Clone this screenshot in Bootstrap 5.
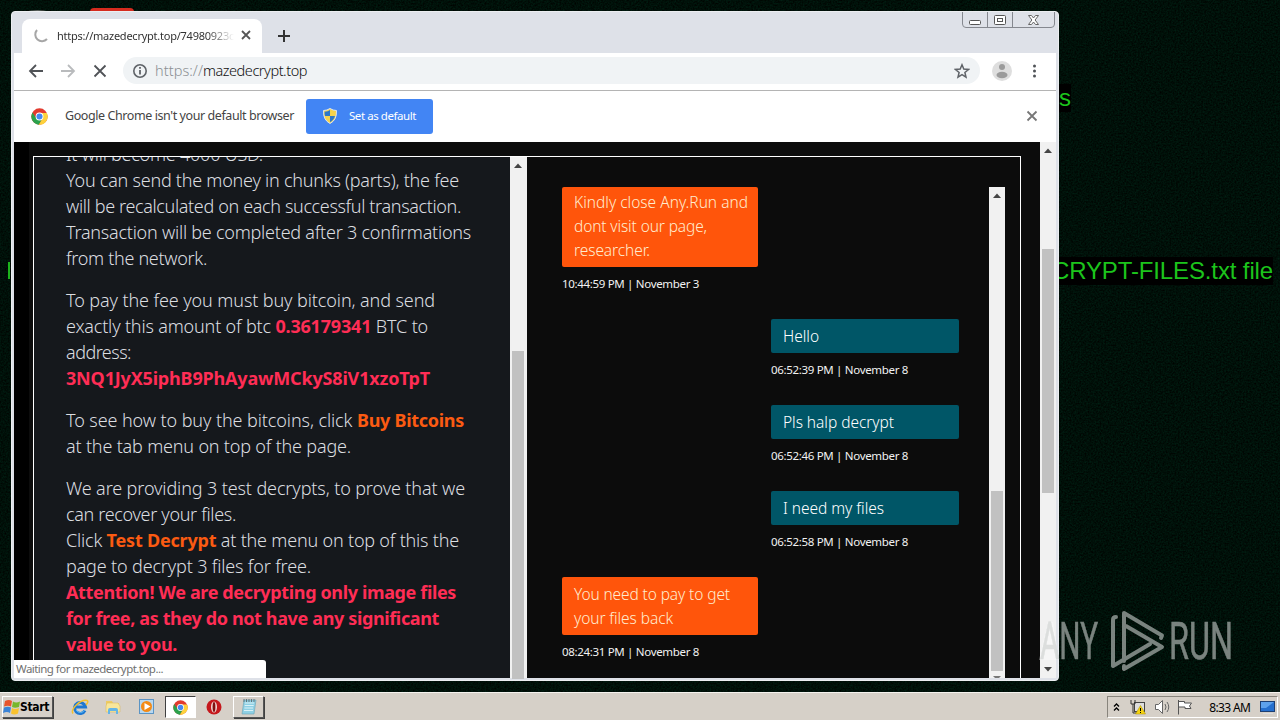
<!DOCTYPE html>
<html lang="en">
<head>
<meta charset="utf-8">
<title>Desktop</title>
<link href="https://cdn.jsdelivr.net/npm/bootstrap@5.3.0/dist/css/bootstrap.min.css" rel="stylesheet">
<style>
body{width:1280px;height:720px;overflow:hidden;background:#000e08;font-family:"Noto Sans","Open Sans",sans-serif;line-height:1}
.desk{height:692px}
.noise{inset:0}
.wall{font:24px/28px "Liberation Sans",sans-serif;color:#1cc41c;background:#000;white-space:pre}
.fit{display:inline-block;white-space:pre}
.win{left:11px;top:11px;width:1048px;height:670px;background:#dee1e8;border-radius:4px;border:1px solid #eceef1;padding:0 2px 2px;overflow:hidden}
.strip{height:41px;background:#dee1e8;padding-left:8px}
.tabx{width:240px;height:34px;background:#fff;border-radius:8px 8px 0 0;margin-top:7px;padding:0 0 2px 12px}
.tabt{width:177px;font:11px "Noto Sans",sans-serif;color:#333;overflow:hidden;-webkit-mask-image:linear-gradient(90deg,#000 150px,transparent 177px)}
.ctl{right:3px;top:-1px;height:17px;border:1px solid #85888f;border-radius:0 0 4px 4px}
.ctl div{border-right:1px solid #85888f}
.ctl div:last-child{border:0}
.ctl svg{display:block}
.tools{height:38px;background:#fff;border-bottom:1px solid #b4b4b4;padding-bottom:2px}
.url{width:857px;height:27px;margin-left:15px;background:#f0f3f5;border-radius:14px;font-size:14.5px;font-weight:300;padding:0 10px 0 9px}
.info{height:51px;background:#fff;color:#444;font-size:12.5px;padding-left:17px}
.setd{width:127px;height:35px;background:#4285f4;color:#fff;border-radius:3px;font-size:11.5px;margin-left:12px;padding:0 0 2px 17px}
.page{height:536px;background:#000}
.canvasx{width:1011px;background:#0c0c0c;margin-left:15px;padding:14px 4px 0}
.frame{border:1px solid #fff;border-bottom:0;height:522px;width:988px}
.left{width:476px;background:#15181c;color:#dcdee0;overflow:hidden;padding-left:32px}
.left .ln{height:26px;line-height:26px;font-size:18px;font-weight:300}
.left .gp{height:16px}
.left b{font-weight:700}
.red{color:#ff2d55}.org{color:#fb5b12}
.sb{width:16px;background:#f1f1f1;position:relative;flex:none}
.thumb{width:12px;background:#c1c1c1;margin:0 2px}
.chat{width:443px;margin:30px 0 0 19px;padding-left:16px}
.bub{border-radius:2px;color:#fff;font-size:15.5px;font-weight:300;line-height:24px;padding:3px 11px 0 12px}
.bo{background:#ff550b;width:196px;color:#ffeccf}
.bt{background:#005667;width:188px;margin-left:209px;height:34px;padding-top:5px}
.tm{height:16px;line-height:16px;font-size:11.5px;color:#f2f2f2;margin-top:9px}
.tmr{margin-left:209px}
.status{left:2px;bottom:2px;width:252px;height:18px;background:#fff;border-top-right-radius:3px;color:#707070;font-size:11.5px;line-height:18px;padding-left:2px}
.task{height:28px;background:#d6d0c8;border-top:1px solid #f4f2ee;padding:3px 2px 0}
.tbtn{height:22px;border:1px solid;border-color:#fff #555 #555 #fff;box-shadow:1px 1px #404040}
.start{width:51px;font:bold 12px/20px "DejaVu Sans Condensed","Liberation Sans",sans-serif;color:#000}
.tdown{background:#fff;border-color:#404040 #fff #fff #404040;box-shadow:none}
.tray{width:171px;height:22px;border:1px solid;border-color:#88847c #fff #fff #88847c;font:12px "Noto Sans",sans-serif;color:#000;padding-left:4px}
</style>
</head>
<body>
<svg width="0" height="0" class="position-absolute"><defs>
<g id="chrome"><circle cx="12" cy="12" r="11.500" fill="#e23b2f"/><path d="M2 6.300A11.500 11.500 0 0 0 11 23.500L16.500 14.500 12 12 7.500 14.500z" fill="#2ba24c"/><path d="M12 7h10.400A11.500 11.500 0 0 1 11 23.500L16.500 14.500z" fill="#fdd23c"/><circle cx="12" cy="12" r="5.500" fill="#fff"/><circle cx="12" cy="12" r="4.300" fill="#4688f1"/></g>
<g id="flag"><path d="M2 3q4-2 7 0L8 8.500Q5 7 1 8.500z" fill="#e8542c"/><path d="M10 3.500q3 2 7 0L16 9q-4 1.500-7 0z" fill="#77b72b"/><path d="M1 9.500q4-1.500 7 0L7 15q-3-2-7 0z" fill="#3b83d6"/><path d="M9 10q3 2 7 0l-1 5.500q-4 2-7 0z" fill="#f9c22e"/></g>
</defs></svg>
<div class="desk position-relative overflow-hidden">
  <svg class="noise position-absolute w-100 h-100"><filter id="n" x="0" y="0" width="100%" height="100%" color-interpolation-filters="sRGB"><feTurbulence type="fractalNoise" baseFrequency=".6" numOctaves="2"/><feColorMatrix values="0 0 0 0 0  0 .15 0 0 -.012  0 .1 0 0 -.016  0 0 0 0 1"/></filter><rect width="1280" height="692" filter="url(#n)"/><path d="M90 12q0-4 4-4h36q4 0 4 4z" fill="#d52b1e"/><path d="M24 12q14-4 26 0z" fill="#5d6460"/></svg>
  <div class="wall position-absolute" style="right:209px;top:84px"><span class="fit">s</span></div>
  <div class="wall position-absolute" style="left:1052px;top:257px;width:221px"><span class="fit" data-w="221">CRYPT-FILES.txt file</span></div>
  <div class="position-absolute" style="left:8px;top:262px;width:2px;height:17px;background:#1cb41c"></div>

  <div class="win position-absolute">
    <div class="strip d-flex">
      <div class="tabx d-flex align-items-center">
        <svg width="16" height="16" fill="none" stroke="#a6a6a6" stroke-width="2"><path d="M3 3A6.200 6.200 0 1 0 13 12"/></svg>
        <div class="tabt" style="margin-left:7px"><span class="fit" data-w="177">https://mazedecrypt.top/74980923c</span></div>
        <svg width="10" height="10" style="margin-left:7px" stroke="#555" stroke-width="1.800"><path d="M1 1l8 8M9 1L1 9"/></svg>
      </div>
      <svg width="14" height="14" style="margin:17px 0 0 15px" stroke="#333" stroke-width="2"><path d="M7 1v12M1 7h12"/></svg>
      <div class="ctl position-absolute d-flex">
        <div><svg width="24" height="16"><rect x="6.500" y="8.500" width="11" height="4" rx="1" fill="#fff" stroke="#555"/></svg></div>
        <div><svg width="24" height="16" fill="#fff" stroke="#555"><rect x="6.500" y="3.500" width="11" height="9" rx="1"/><rect x="9.500" y="6.500" width="5" height="3"/></svg></div>
        <div><svg width="41" height="16"><path d="M15.500 3.500h3l2 2.500 2-2.500h3l-3.400 4.500 3.400 4.500h-3l-2-2.500-2 2.500h-3l3.400-4.500z" fill="#fff" stroke="#666"/></svg></div>
      </div>
    </div>
    <div class="tools d-flex align-items-center">
      <svg width="94" height="16" fill="none" stroke-width="1.800"><path d="M29 8H16M22 2l-6 6 6 6" stroke="#505357"/><path d="M47 8h13M54 2l6 6-6 6" stroke="#b9bbbd"/><path d="M80.500 2.500l11 11M91.500 2.500l-11 11" stroke="#505357"/></svg>
      <div class="url d-flex align-items-center">
        <svg width="16" height="16" fill="none" stroke="#5f6368"><circle cx="8" cy="8" r="6.200" stroke-width="1.600"/><path d="M8 7v4.500M8 4v1.800" stroke-width="1.800"/></svg>
        <span class="fit" style="margin-left:7px"><span class="fit" data-w="48" style="color:#8b8f93">https://</span><span class="fit" data-w="104" style="color:#111">mazedecrypt.top</span></span>
        <svg class="ms-auto" width="16" height="16" viewBox="0 0 16 16" fill="none" stroke="#5f6368" stroke-width="1.500"><path d="M8 1.800l1.800 4.300 4.700.4-3.600 3 1.100 4.600L8 11.700 4 14.100l1.100-4.600-3.600-3 4.700-.4z"/></svg>
      </div>
      <svg width="60" height="22"><circle cx="22" cy="11" r="10" fill="#dedede"/><circle cx="22" cy="7" r="3" fill="#9b9b9b"/><ellipse cx="22" cy="15" rx="5.500" ry="3.200" fill="#9b9b9b"/><g fill="#505357"><circle cx="54.500" cy="6" r="1.500"/><circle cx="54.500" cy="11" r="1.500"/><circle cx="54.500" cy="16" r="1.500"/></g></svg>
    </div>
    <div class="info d-flex align-items-center">
      <svg width="17" height="17" viewBox="0 0 24 24"><use href="#chrome"/></svg>
      <span class="fit" data-w="229" style="margin-left:17px">Google Chrome isn't your default browser</span>
      <div class="setd d-flex align-items-center">
        <svg width="14" height="16" viewBox="0 0 14 16"><path d="M7 .5Q10 2.500 13.500 2.500 14 12 7 15.500 0 12 .5 2.500 4 2.500 7 .5z" fill="#f6d34c" stroke="#dfe6ea"/><path d="M7 2v6H2q-.6-2-.4-4.300Q5 3.500 7 2zM7 8h5Q11 12 7 14.300z" fill="#2e78c8"/></svg>
        <span class="fit" data-w="67" style="margin-left:12px">Set as default</span>
      </div>
      <svg class="ms-auto" style="margin:0 18px 2px 0" width="12" height="12" stroke="#777" stroke-width="1.800"><path d="M1.500 1.500l9 9M10.500 1.500l-9 9"/></svg>
    </div>
    <div class="page d-flex">
      <div class="canvasx">
        <div class="frame d-flex">
          <div class="left"><div style="margin-top:-16px">
            <div class="ln"><span class="fit" data-w="197">It will become 4000 USD.</span></div>
            <div class="ln"><span class="fit" data-w="393">You can send the money in chunks (parts), the fee</span></div>
            <div class="ln"><span class="fit" data-w="395">will be recalculated on each successful transaction.</span></div>
            <div class="ln"><span class="fit" data-w="405">Transaction will be completed after 3 confirmations</span></div>
            <div class="ln"><span class="fit" data-w="141">from the network.</span></div>
            <div class="gp"></div>
            <div class="ln"><span class="fit" data-w="369">To pay the fee you must buy bitcoin, and send</span></div>
            <div class="ln"><span class="fit" data-w="362">exactly this amount of btc <b class="red">0.36179341</b> BTC to</span></div>
            <div class="ln"><span class="fit" data-w="65">address:</span></div>
            <div class="ln"><span class="fit" data-w="364"><b class="red">3NQ1JyX5iphB9PhAyawMCkyS8iV1xzoTpT</b></span></div>
            <div class="gp"></div>
            <div class="ln"><span class="fit" data-w="291">To see how to buy the bitcoins, click </span><span class="fit" data-w="107"><b class="org">Buy Bitcoins</b></span></div>
            <div class="ln"><span class="fit" data-w="285">at the tab menu on top of the page.</span></div>
            <div class="gp"></div>
            <div class="ln"><span class="fit" data-w="399">We are providing 3 test decrypts, to prove that we</span></div>
            <div class="ln"><span class="fit" data-w="170">can recover your files.</span></div>
            <div class="ln"><span class="fit" data-w="393">Click <b class="org">Test Decrypt</b> at the menu on top of this the</span></div>
            <div class="ln"><span class="fit" data-w="245">page to decrypt 3 files for free.</span></div>
            <div class="ln"><span class="fit" data-w="390"><b class="red">Attention! We are decrypting only image files</b></span></div>
            <div class="ln"><span class="fit" data-w="373"><b class="red">for free, as they do not have any significant</b></span></div>
            <div class="ln"><span class="fit" data-w="111"><b class="red">value to you.</b></span></div>
          </div></div>
          <div class="sb" style="width:17px"><svg class="d-block" width="16" height="16"><path d="M4 11h8L8 6.500z" fill="#444"/></svg><div class="thumb" style="margin-top:178px;height:328px"></div></div>
          <div class="chat">
            <div class="bub bo" style="height:80px"><div><span class="fit" data-w="174">Kindly close Any.Run and</span></div><div><span class="fit" data-w="133">dont visit our page,</span></div><div><span class="fit" data-w="76">researcher.</span></div></div>
            <div class="tm"><span class="fit" data-w="137">10:44:59 PM | November 3</span></div>
            <div class="bub bt" style="margin-top:27px"><span class="fit" data-w="36">Hello</span></div>
            <div class="tm tmr"><span class="fit" data-w="137">06:52:39 PM | November 8</span></div>
            <div class="bub bt" style="margin-top:27px"><span class="fit" data-w="111">Pls halp decrypt</span></div>
            <div class="tm tmr"><span class="fit" data-w="137">06:52:46 PM | November 8</span></div>
            <div class="bub bt" style="margin-top:27px"><span class="fit" data-w="101">I need my files</span></div>
            <div class="tm tmr"><span class="fit" data-w="137">06:52:58 PM | November 8</span></div>
            <div class="bub bo" style="margin-top:27px;height:58px;padding-top:5px"><div><span class="fit" data-w="156">You need to pay to get</span></div><div><span class="fit" data-w="99">your files back</span></div></div>
            <div class="tm"><span class="fit" data-w="137">08:24:31 PM | November 8</span></div>
          </div>
          <div class="sb" style="margin-top:30px"><svg class="d-block" width="16" height="16"><path d="M4 11h8L8 6.500z" fill="#444"/></svg><div class="thumb" style="margin-top:288px;height:180px"></div><svg class="d-block" width="16" height="7"><path d="M4 5h8l-2 2H6z" fill="#777"/></svg></div>
        </div>
      </div>
      <div class="sb ms-auto"><svg class="d-block" width="16" height="16"><path d="M4 11h8L8 6.500z" fill="#444"/></svg><div class="thumb" style="margin-top:91px;height:244px"></div><svg class="d-block" style="margin-top:170px" width="16" height="16"><path d="M4 4h8L8 8.500z" fill="#444"/></svg></div>
    </div>
    <div class="status position-absolute"><span class="fit" data-w="147">Waiting for mazedecrypt.top...</span></div>
  </div>

  <svg class="position-absolute" style="left:1036px;top:600px" width="210" height="84" opacity=".72">
    <g font-family="Roboto,sans-serif" font-weight="400" font-size="52" fill="#a9b0ad" stroke="#a9b0ad" stroke-width=".6"><text x="4" y="59" textLength="58" lengthAdjust="spacingAndGlyphs">ANY</text><text x="133" y="59" textLength="64" lengthAdjust="spacingAndGlyphs">RUN</text></g>
    <path d="M3 60l9-38h5l6 38z" fill="#fff" opacity=".5"/>
    <g fill="none" stroke="#a9b0ad" stroke-width="4" stroke-linejoin="round" stroke-linecap="round"><path d="M88 61V13L126 35.500L125 38M90 26L126 47L88 69V66M114 44L77 66V20q0-3 3-3"/></g>
  </svg>
</div>

<div class="task d-flex justify-content-between">
  <div class="d-flex align-items-center" style="height:22px">
    <div class="tbtn start d-flex align-items-center"><svg width="18" height="18" viewBox="0 0 18 18"><use href="#flag"/></svg><span class="fit" data-w="29" style="margin-left:-1px">Start</span></div>
    <svg width="18" height="18" viewBox="0 0 18 18" style="margin-left:18px" fill="none"><path d="M14 12.500A5.500 5.500 0 1 1 14.500 9H5" stroke="#1e78d2" stroke-width="3"/><path d="M14 11.500A5 5 0 0 1 5 12" stroke="#5cb8f4" stroke-width="1"/><path d="M2 15.500C-1 11 10 1 16 2.500q2 1-1 4.500" stroke="#f2c02e" stroke-width="1.500"/></svg>
    <svg width="18" height="18" viewBox="0 0 18 18" style="margin-left:15px"><path d="M2 3h6l1 2h6v8H2z" fill="#eecb62"/><path d="M3 5h11l2 3v6H2V8z" fill="#f8e69a" stroke="#d8b656" stroke-width=".5"/><path d="M4 16v-4q0-2 2-2h6q2 0 2 2v4h-2v-3H6v3z" fill="#65b5e6"/></svg>
    <svg width="18" height="18" viewBox="0 0 18 18" style="margin-left:16px"><rect x="1.500" y="1.500" width="14" height="14" fill="#b8d8f0" stroke="#5b94c4"/><circle cx="8.500" cy="8.500" r="5.500" fill="#f38b16"/><path d="M6.500 5l6 3.500-6 3.500z" fill="#fff"/></svg>
    <div class="tbtn tdown d-flex align-items-center justify-content-center" style="width:31px;margin-left:9px"><svg width="15" height="15" viewBox="0 0 24 24"><use href="#chrome"/></svg></div>
    <svg width="16" height="18" viewBox="0 0 16 18" style="margin-left:10px"><ellipse cx="8" cy="9" rx="7.500" ry="7.500" fill="#c5181c"/><ellipse cx="8" cy="9" rx="3" ry="5.500" fill="#f2dad7"/><ellipse cx="8" cy="9" rx="1.400" ry="5" fill="#80100f"/></svg>
    <div class="tbtn d-flex align-items-center justify-content-center" style="width:31px;margin-left:11px"><svg width="18" height="18" viewBox="0 0 18 18"><path d="M4 2h12l-2 14H2z" fill="#8fd0e4" stroke="#6aa3b5" stroke-width=".6"/><path d="M5 5h9M4.700 7.500h9M4.400 10H13M4 12.500h9" stroke="#d9f2f8"/><path d="M4 1v3M6.500 1v3M9 1v3M11.500 1v3M14 1v3" stroke="#63767c"/></svg></div>
  </div>
  <div class="tray d-flex align-items-center">
    <svg width="10" height="12" fill="none" stroke="#000" stroke-width="1.300"><path d="M2 5.500l2.500-2.500L7 5.500M2 9.500L4.500 7 7 9.500"/></svg>
    <svg width="16" height="16" style="margin-left:8px"><rect x="4.500" y="3.500" width="10" height="9" fill="#ddd" stroke="#444"/><path d="M1 1v4h2v9h5M5 1v4H3" fill="none" stroke="#333"/><path d="M10.500 6.500l5 8.500h-10z" fill="#f6d311" stroke="#a98c00" stroke-width=".5"/><path d="M10.500 9v3M10.500 13v1" stroke="#000"/></svg>
    <svg width="18" height="16" style="margin-left:8px" fill="none" stroke="#666"><path d="M1.500 5.500h3l4-4v13l-4-4h-3z" fill="#fff"/><path d="M11 5q2 3 0 6M13 3q3.500 5 0 10"/></svg>
    <svg width="18" height="16" style="margin-left:6px"><path d="M1.500 1v14.500M1.500 2.500h6v1.500h7l-2 3 1.500 2.500h-6V8h-6" fill="#fff" stroke="#555"/></svg>
    <span class="fit" data-w="41" style="margin-left:14px">8:33 AM</span>
    <svg width="18" height="16" style="margin-left:9px"><rect x="1.500" y="2.500" width="14" height="10" fill="#2670ce" stroke="#1d3f73"/><path d="M2 3h13L7 9H2z" fill="#5ea2ec"/><path d="M4 14.500h10" stroke="#ddd"/></svg>
  </div>
</div>
<script>
/* Tune tracking so each label takes its design width. */
document.querySelectorAll('.fit[data-w]').forEach(function(e){
  var d=+e.dataset.w-e.getBoundingClientRect().width,n=e.textContent.length;
  e.style.letterSpacing=(d/n).toFixed(3)+'px';
});
</script>
<script src="https://cdn.jsdelivr.net/npm/bootstrap@5.3.0/dist/js/bootstrap.bundle.min.js"></script>
</body>
</html>
